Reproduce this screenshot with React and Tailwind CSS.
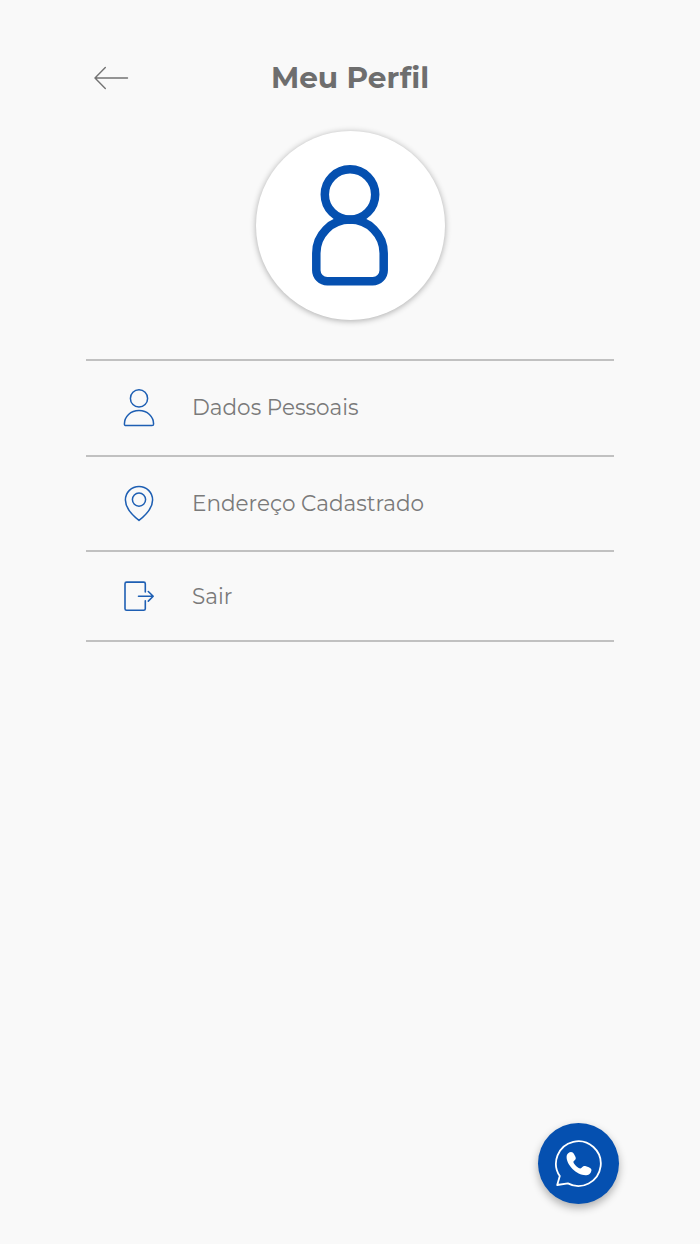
import clsx from 'clsx';

function ArrowLeftIcon() {
  return (
    <svg width="36" height="24" viewBox="0 0 36 24" fill="none" stroke="#737373" strokeWidth="1.4" strokeLinecap="round">
      <path d="M34.5 12H2M12.3 1.5L2 12l10.3 10.5" />
    </svg>
  );
}

function AvatarIcon() {
  return (
    <svg width="80" height="124" viewBox="0 0 80 124" fill="none" stroke="#0550b0" strokeWidth="8.5">
      <circle cx="40" cy="31.5" r="25.2" />
      <path d="M6.3 90.3a33.7 33.7 0 0 1 67.4 0V107.3a11 11 0 0 1-11 11H17.3a11 11 0 0 1-11-11z" />
    </svg>
  );
}

function UserIcon() {
  return (
    <svg width="32" height="40" viewBox="0 0 32 40" fill="none" stroke="#1e5fb3" strokeWidth="1.5">
      <circle cx="16" cy="10.4" r="8.6" />
      <path d="M1.4 36C1.4 28.5 7.6 22.5 16 22.5s14.6 6 14.6 13.5c0 1-.6 1.6-1.6 1.6H3c-1 0-1.6-.6-1.6-1.6z" />
    </svg>
  );
}

function PinIcon() {
  return (
    <svg width="32" height="40" viewBox="0 0 32 40" fill="none" stroke="#1e5fb3" strokeWidth="1.5" strokeLinejoin="round">
      <path d="M16 36.4C10.6 32.2 2.4 24.2 2.4 16A13.6 13.6 0 0 1 29.6 16C29.6 24.2 21.4 32.2 16 36.4z" />
      <circle cx="16" cy="15.6" r="6.6" />
    </svg>
  );
}

function LogoutIcon() {
  return (
    <svg width="32" height="40" viewBox="0 0 32 40" fill="none" stroke="#1e5fb3" strokeWidth="1.6" strokeLinecap="round" strokeLinejoin="round">
      <path d="M22.3 16V7.7c0-1-.6-1.6-1.6-1.6H3.6C2.6 6.1 2 6.7 2 7.7v25c0 1 .6 1.6 1.6 1.6h17.1c1 0 1.6-.6 1.6-1.6v-8" />
      <path d="M15.5 20.3h14.7M25.3 15.5l4.9 4.8-4.9 4.8" />
    </svg>
  );
}

function WhatsappIcon() {
  return (
    <svg width="50" height="50" viewBox="0 0 50 50" fill="none">
      <path
        d="M5.8 37.1A22.4 22.4 0 1 1 13.9 44.4L3.2 46z"
        stroke="#fff"
        strokeWidth="1.8"
        strokeLinejoin="round"
      />
      <path
        d="M14.2 14.2C16.5 12.4 18.8 12.8 20.1 15.2l1.3 2.5c.9 1.8.2 3-1.3 4.1-.9.7-.8 1.6-.1 2.7 1.2 1.9 2.7 3.3 4.7 4.5 1.2.7 2.1.6 2.9-.3 1.3-1.4 2.5-2 4.4-1.4l2.8 1c2.7 1 3.3 2.7 2.1 4.9-1 1.8-2.6 2.9-4.7 3C23 36.7 12.2 25.8 12.6 17.8c.1-1.4.5-2.7 1.6-3.6z"
        fill="#fff"
      />
    </svg>
  );
}

const items = [
  { label: 'Dados Pessoais', icon: UserIcon, row: 'h-[96px]', text: 'pb-0.5' },
  { label: 'Endereço Cadastrado', icon: PinIcon, row: 'h-[95px]', text: 'pb-0.5' },
  { label: 'Sair', icon: LogoutIcon, row: 'h-[90px]', text: 'pb-px' },
];

export default function App() {
  return (
    <div className="relative min-h-[1244px] bg-[#f9f9f9] px-[86px] pt-[60px] font-[Montserrat,Inter,sans-serif]">
      <header className="grid h-9 grid-cols-[50px_1fr_50px] items-center">
        <button type="button" aria-label="Voltar" className="pl-[7px]">
          <ArrowLeftIcon />
        </button>
        <h1 className="self-start text-center text-[29.6px] leading-[34px] font-bold whitespace-nowrap text-[#6e6e6e]">
          Meu Perfil
        </h1>
      </header>

      <div className="mx-auto mt-[34.5px] flex h-[189px] w-[189px] items-center justify-center rounded-full bg-white shadow-[0_1px_6px_rgba(0,0,0,0.32)]">
        <AvatarIcon />
      </div>

      <ul className="mt-[39.5px] border-b-2 border-[#c1c1c1]">
        {items.map(({ label, icon: Icon, row, text }) => (
          <li key={label} className={clsx('border-t-2 border-[#c1c1c1]', row)}>
            <button type="button" className="flex h-full w-full items-center pl-[37px] text-left">
              <Icon />
              <span className={clsx('ml-[37px] text-[21.55px] leading-7 text-[#7a7a7a]', text)}>{label}</span>
            </button>
          </li>
        ))}
      </ul>

      <button
        type="button"
        aria-label="WhatsApp"
        className="absolute top-[1123px] left-[538px] flex h-[81px] w-[81px] items-center justify-center rounded-full bg-[#0550b0] shadow-[0_4px_8px_rgba(0,0,0,0.3)]"
      >
        <WhatsappIcon />
      </button>
    </div>
  );
}
